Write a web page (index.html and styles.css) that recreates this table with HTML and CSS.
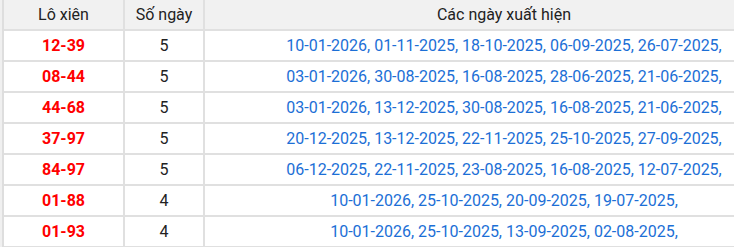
FILE: index.html
```html
<!DOCTYPE html>
<html lang="vi">
<head>
<meta charset="utf-8">
<title>Lô xiên</title>
<link rel="stylesheet" href="styles.css">
</head>
<body>
<div class="wrap">
<table class="lx">
  <colgroup>
    <col class="c1"><col class="c2"><col class="c3">
  </colgroup>
  <thead>
    <tr><th>Lô xiên</th><th>Số ngày</th><th>Các ngày xuất hiện</th></tr>
  </thead>
  <tbody>
    <tr><td class="pair">12-39</td><td>5</td><td class="dates">10-01-2026, 01-11-2025, 18-10-2025, 06-09-2025, 26-07-2025,</td></tr>
    <tr><td class="pair">08-44</td><td>5</td><td class="dates">03-01-2026, 30-08-2025, 16-08-2025, 28-06-2025, 21-06-2025,</td></tr>
    <tr><td class="pair">44-68</td><td>5</td><td class="dates">03-01-2026, 13-12-2025, 30-08-2025, 16-08-2025, 21-06-2025,</td></tr>
    <tr><td class="pair">37-97</td><td>5</td><td class="dates">20-12-2025, 13-12-2025, 22-11-2025, 25-10-2025, 27-09-2025,</td></tr>
    <tr><td class="pair">84-97</td><td>5</td><td class="dates">06-12-2025, 22-11-2025, 23-08-2025, 16-08-2025, 12-07-2025,</td></tr>
    <tr><td class="pair">01-88</td><td>4</td><td class="dates">10-01-2026, 25-10-2025, 20-09-2025, 19-07-2025,</td></tr>
    <tr><td class="pair">01-93</td><td>4</td><td class="dates">10-01-2026, 25-10-2025, 13-09-2025, 02-08-2025,</td></tr>
  </tbody>
</table>
</div>
</body>
</html>
```
FILE: styles.css
```css
html, body {
  margin: 0;
  padding: 0;
  background: #ffffff;
}
.wrap {
  width: 734px;
  height: 247px;
  overflow: hidden;
  border-left: 2px solid #f0f0f0;
  box-sizing: border-box;
}
.lx {
  table-layout: fixed;
  width: 803px;
  border-collapse: separate;
  border-spacing: 0;
  border-left: 2px solid #dedede;
  font-family: Roboto, "Liberation Sans", Arial, sans-serif;
  font-size: 16px;
  color: #222222;
}
.c1 { width: 121px; }
.c2 { width: 80px; }
.c3 { width: 600px; }
.lx th, .lx td {
  box-sizing: border-box;
  height: 31px;
  padding: 0 4px;
  border-right: 2px solid #e0e0e0;
  border-bottom: 2px solid #e0e0e0;
  text-align: center;
  vertical-align: middle;
  white-space: nowrap;
  line-height: 19px;
}
.lx th {
  background: #f1f1f1;
  font-weight: 400;
  color: #222222;
}
.lx td.pair {
  color: #ff0000;
  font-weight: 700;
}
.lx td.dates {
  color: #1c6fd6;
}
```
